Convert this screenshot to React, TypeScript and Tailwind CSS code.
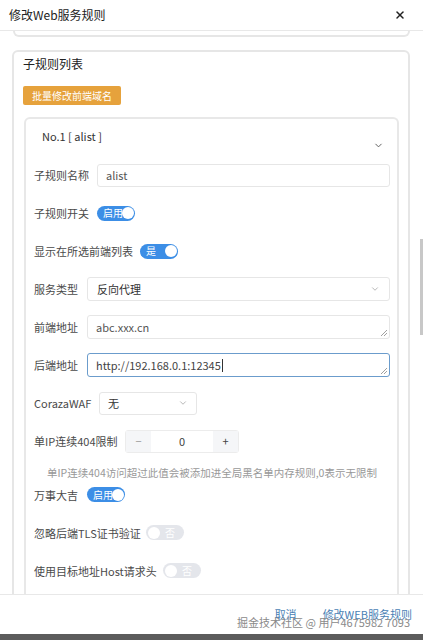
import { X, ChevronDown } from 'lucide-react';

const font = { fontFamily: '"Noto Sans CJK SC", "Noto Sans", sans-serif' };

function Switch({ on, text, width = 38 }: { on: boolean; text: string; width?: number }) {
  return (
    <div
      className={`relative flex h-[15px] shrink-0 items-center rounded-full ${on ? 'bg-[#3c8ee6]' : 'bg-[#e4e6eb]'}`}
      style={{ width }}
    >
      <span
        className={`text-[10px] leading-none ${on ? 'ml-[6px] text-white' : 'ml-auto mr-[9px] text-white'}`}
      >
        {text}
      </span>
      <span
        className={`absolute top-[1.5px] h-[12px] w-[12px] rounded-full bg-white ${on ? 'right-[1.5px]' : 'left-[1.5px]'}`}
      />
    </div>
  );
}

function Resize() {
  return (
    <svg className="absolute bottom-[2px] right-[2px]" width="6" height="6" viewBox="0 0 6 6">
      <path d="M0 6L6 0M3 6L6 3" stroke="#888" strokeWidth="0.8" />
    </svg>
  );
}

function Label({ w, children }: { w: number; children: string }) {
  return (
    <span className="shrink-0 whitespace-nowrap text-[11px] text-[#4a4a4a]" style={{ width: w }}>
      {children}
    </span>
  );
}

export default function App() {
  return (
    <div className="flex h-[640px] w-[423px] flex-col overflow-hidden bg-white text-[#333]" style={font}>
      {/* header */}
      <div className="flex h-[31px] shrink-0 items-center justify-between border-b border-[#e8e8e8] pl-[9px] pr-[17px]">
        <span className="text-[12px] text-[#222]">修改Web服务规则</span>
        <X size={12} strokeWidth={3} className="text-[#222]" />
      </div>

      {/* body */}
      <div className="relative flex-1 overflow-hidden">
        <div className="absolute right-0 top-[208px] h-[96px] w-[3px] bg-[#c8c8c8]" />
        <div className="mx-[13px] h-[6px] rounded-b-[6px] border-[2px] border-t-0 border-[#e6e6e6]" />

        <div className="ml-[12px] mr-[13px] mt-[13px] rounded-[6px] border-[2px] border-[#e6e6e6] px-[9px] pt-[3px]">
          <div className="text-[12px] text-[#222]">子规则列表</div>
          <div className="mt-[13px] inline-block rounded-[2px] bg-[#e6a23c] px-[9px] py-[2px] text-[10px] text-white">
            批量修改前端域名
          </div>

          <div className="ml-[1px] mt-[12px] rounded-t-[6px] border-[2px] border-b-0 border-[#e8e8e8] pb-[20px] pl-[8px] pr-[7px]">
            <div className="flex items-start justify-between pl-[8px] pt-[9px]">
              <span className="text-[11px] text-[#333]">No.1 [ alist ]</span>
              <ChevronDown size={11} className="mr-[6px] mt-[12px] text-[#555]" />
            </div>

            <div className="mt-[12px] flex h-[24px] items-center">
              <Label w={63}>子规则名称</Label>
              <div className="flex h-[23px] flex-1 items-center rounded-[3px] border border-[#e6e6e6] px-[8px] text-[11px] text-[#555]">
                alist
              </div>
            </div>

            <div className="mt-[14px] flex h-[24px] items-center">
              <Label w={63}>子规则开关</Label>
              <Switch on text="启用" />
            </div>

            <div className="mt-[14px] flex h-[24px] items-center">
              <Label w={106}>显示在所选前端列表</Label>
              <Switch on text="是" />
            </div>

            <div className="mt-[14px] flex h-[24px] items-center">
              <Label w={53}>服务类型</Label>
              <div className="flex h-[24px] flex-1 items-center justify-between rounded-[3px] border border-[#e6e6e6] px-[9px] text-[11px] text-[#333]">
                反向代理
                <ChevronDown size={10} className="text-[#aaa]" />
              </div>
            </div>

            <div className="mt-[14px] flex h-[24px] items-center">
              <Label w={53}>前端地址</Label>
              <div className="relative flex h-[24px] flex-1 items-center rounded-[3px] border border-[#e6e6e6] px-[8px] text-[11px] text-[#555]">
                abc.xxx.cn
                <Resize />
              </div>
            </div>

            <div className="mt-[14px] flex h-[24px] items-center">
              <Label w={53}>后端地址</Label>
              <div className="relative flex h-[24px] flex-1 items-center rounded-[3px] border border-[#6b9ccc] px-[8px] text-[11px] text-[#444]">
                http://192.168.0.1:12345<span className="ml-[1px] h-[13px] w-[1px] bg-[#333]" />
                <Resize />
              </div>
            </div>

            <div className="mt-[14px] flex h-[24px] items-center">
              <Label w={65}>CorazaWAF</Label>
              <div className="flex h-[23px] w-[98px] items-center justify-between rounded-[3px] border border-[#e6e6e6] px-[8px] text-[11px] text-[#333]">
                无
                <ChevronDown size={10} className="text-[#aaa]" />
              </div>
            </div>

            <div className="mt-[14px] flex h-[24px] items-center">
              <Label w={91}>单IP连续404限制</Label>
              <div className="flex h-[23px] w-[114px] items-stretch rounded-[3px] border border-[#ececec] text-[11px]">
                <div className="flex w-[25px] items-center justify-center bg-[#f5f6f8] text-[#999]">−</div>
                <div className="flex flex-1 items-center justify-center text-[#444]">0</div>
                <div className="flex w-[25px] items-center justify-center bg-[#f5f6f8] text-[#444]">+</div>
              </div>
            </div>

            <div className="mt-[12px] pl-[13px] text-[10.5px] text-[#999]">
              单IP连续404访问超过此值会被添加进全局黑名单内存规则,0表示无限制
            </div>

            <div className="mt-[2px] flex h-[24px] items-center">
              <Label w={53}>万事大吉</Label>
              <Switch on text="启用" />
            </div>

            <div className="mt-[14px] flex h-[24px] items-center">
              <Label w={112}>忽略后端TLS证书验证</Label>
              <Switch on={false} text="否" />
            </div>

            <div className="mt-[14px] flex h-[24px] items-center">
              <Label w={129}>使用目标地址Host请求头</Label>
              <Switch on={false} text="否" />
            </div>
          </div>
        </div>
      </div>

      {/* footer */}
      <div className="relative flex h-[40px] shrink-0 items-center justify-end gap-[26px] border-t border-[#e8e8e8] pr-[11px] text-[11px]">
        <span className="text-[#4a7fb5]">取消</span>
        <span className="text-[#4a7fb5]">修改WEB服务规则</span>
        <span className="pointer-events-none absolute right-[13px] top-[19px] text-[11px] text-[#8a8a8a]">
          掘金技术社区 @ 用户4675982 7093
        </span>
      </div>
      <div className="h-[6px] shrink-0 bg-[#5c5c5c]" />
    </div>
  );
}
